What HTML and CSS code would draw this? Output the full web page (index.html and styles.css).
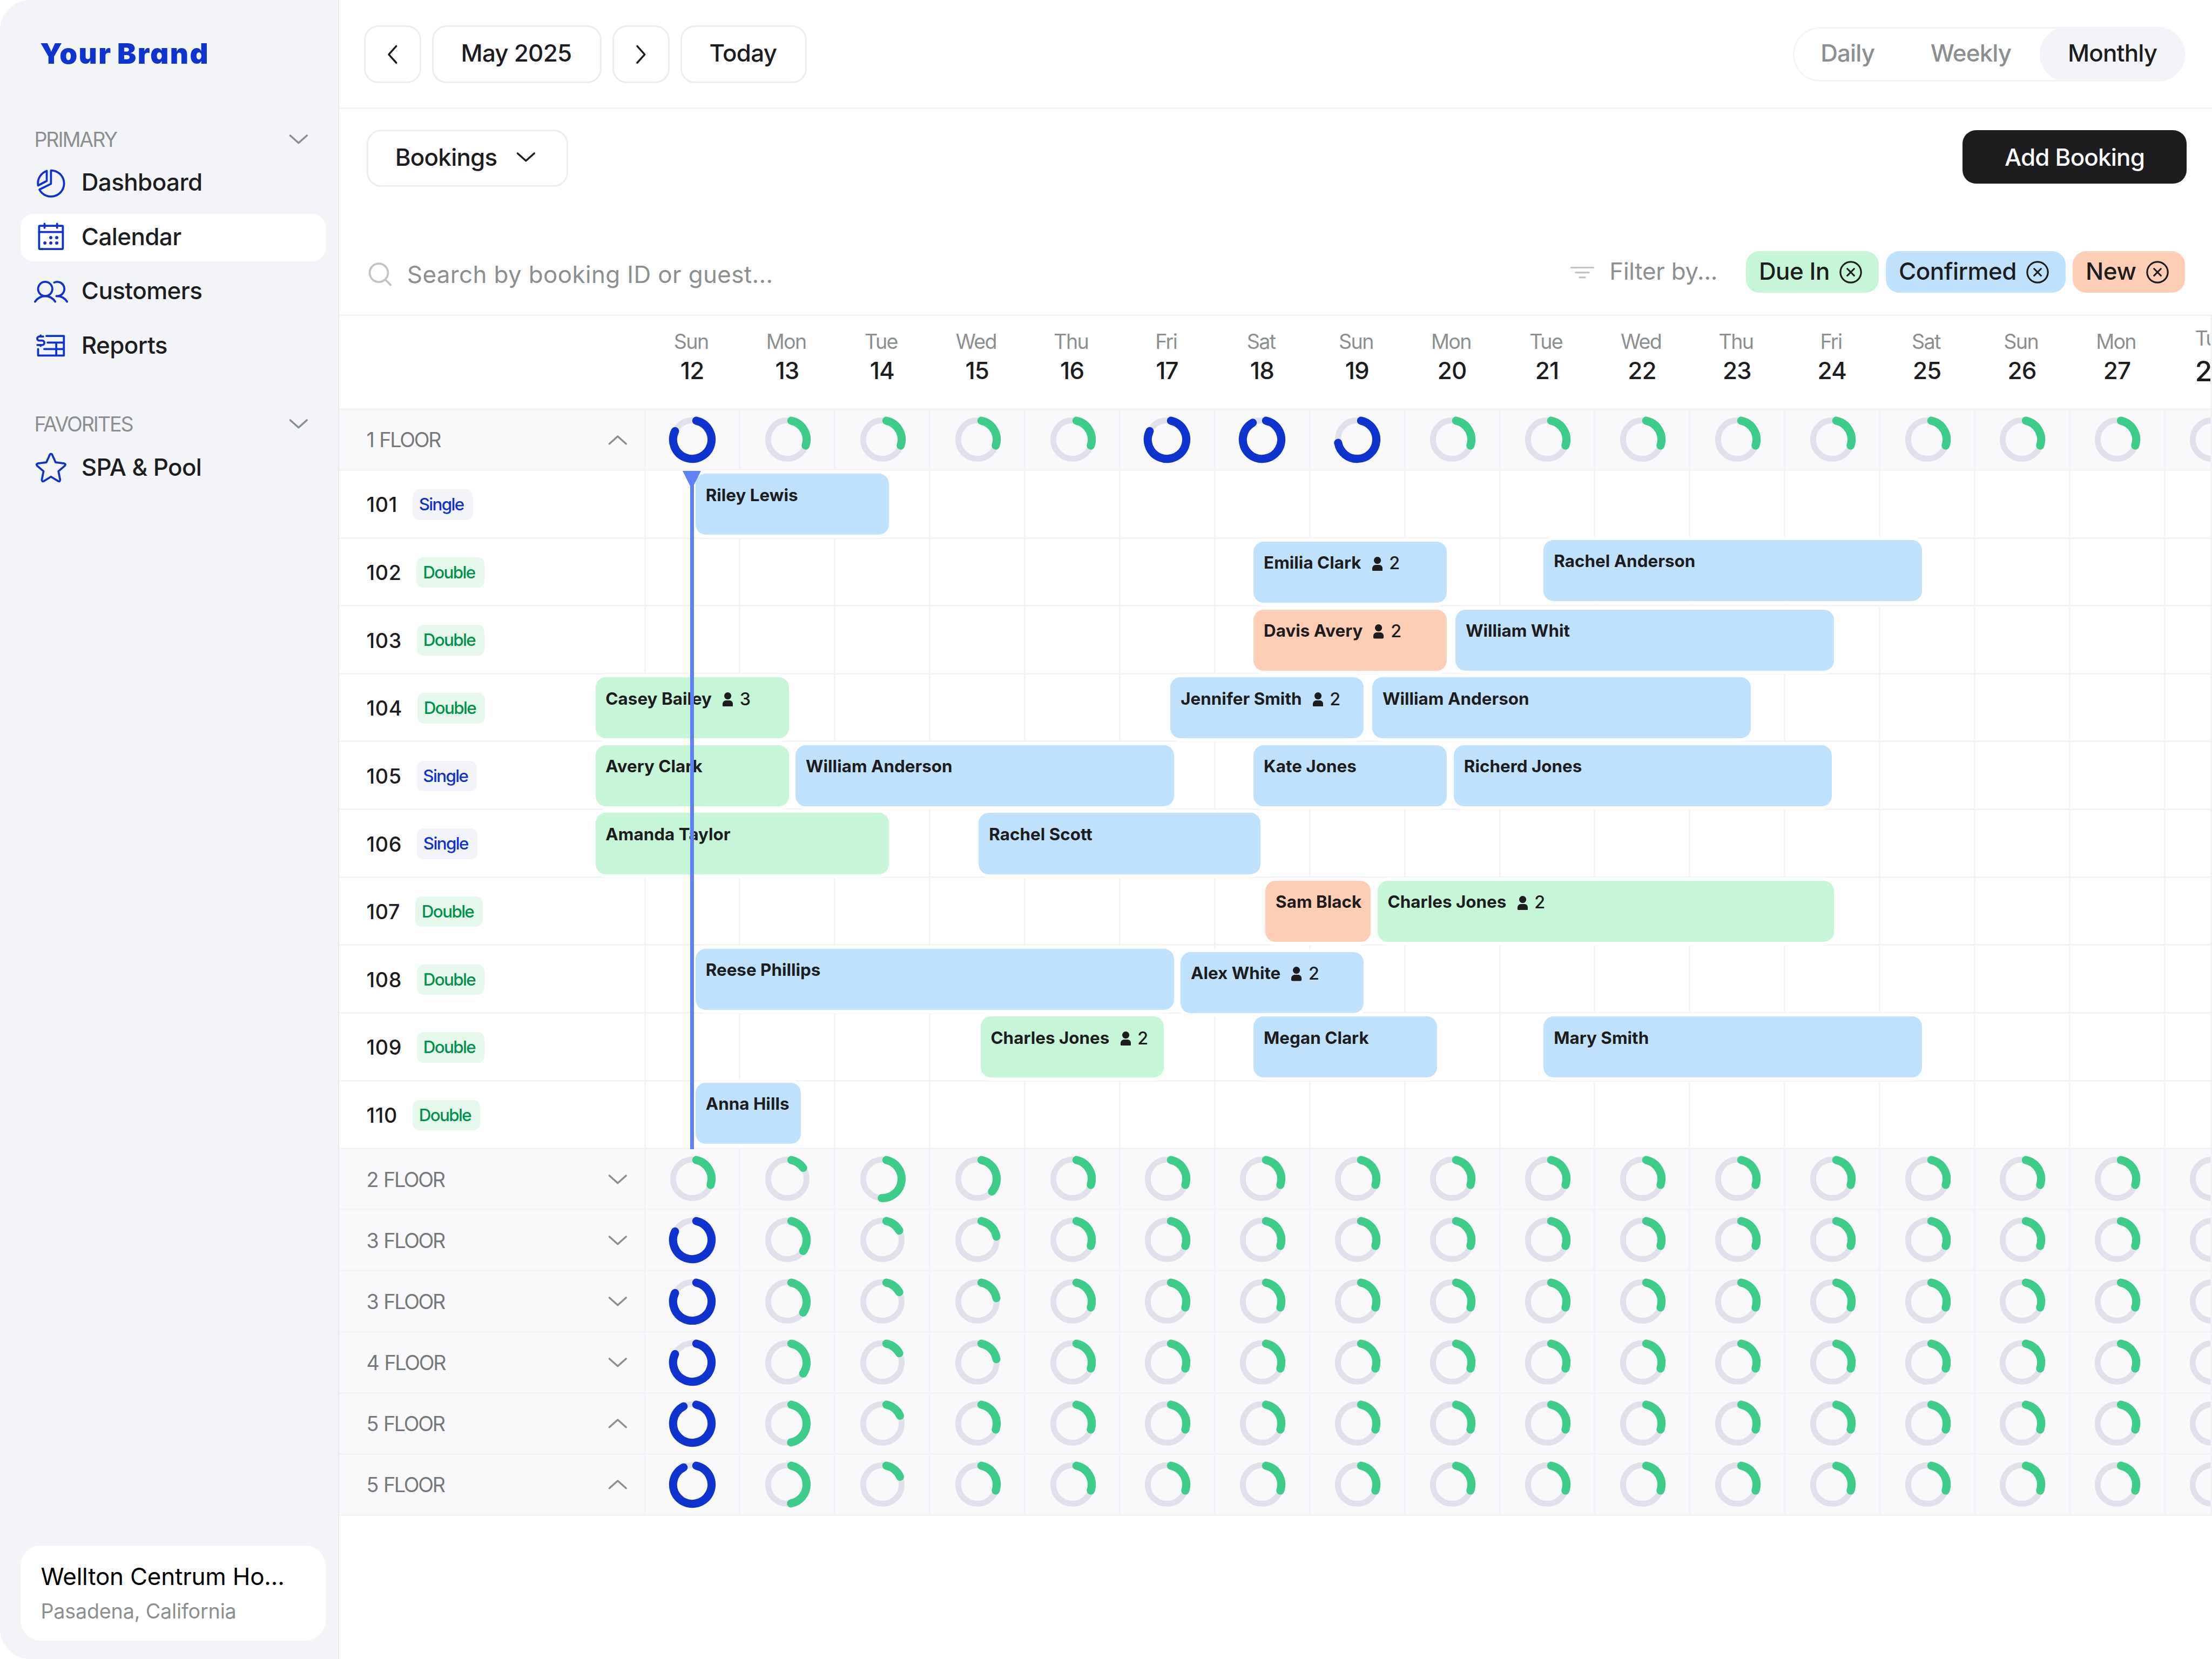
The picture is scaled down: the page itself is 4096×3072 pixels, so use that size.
FILE: index.html
```html
<!DOCTYPE html>
<html lang="en">
<head>
<meta charset="utf-8">
<title>Booking Calendar</title>
<link rel="stylesheet" href="styles.css">
</head>
<body>

<div class="app">
  <aside class="sidebar">
    <div class="brand">Your Brand</div>

    <div class="nav-heading">
      <span>PRIMARY</span>
      <svg class="chevron" viewBox="0 0 12 12"><path d="M1.1 3.8L6 8.2l4.9-4.4"/></svg>
    </div>
    <nav class="nav">
      <a class="nav-item">
        <svg class="nav-icon" viewBox="0 0 20 20"><path d="M10 2.4v7.9l-6.8 3.4A7.7 7.7 0 1 0 10 2.4z"/><path d="M7.5 2.7v5.9L2.4 11.3A7.8 7.8 0 0 1 7.5 2.7z"/></svg>
        <span>Dashboard</span>
      </a>
      <a class="nav-item active">
        <svg class="nav-icon" viewBox="0 0 20 20">
          <rect x="3" y="3.2" width="14" height="13.7" rx=".5"/><path d="M3 6.9h14M6.2 2v2.4M13.6 2v2.4"/>
          <g class="dots"><circle cx="9.9" cy="10.2" r=".95"/><circle cx="13.4" cy="10.2" r=".95"/><circle cx="6.4" cy="13.4" r=".95"/><circle cx="9.9" cy="13.4" r=".95"/><circle cx="13.4" cy="13.4" r=".95"/></g>
        </svg>
        <span>Calendar</span>
      </a>
      <a class="nav-item">
        <svg class="nav-icon" viewBox="0 0 20 20"><circle cx="6.6" cy="8.3" r="4.2"/><path d="M.6 15.8c1.5-2.1 3.5-3.3 6-3.3s4.5 1.2 5.9 3.3M11.9 4.5A4.2 4.2 0 1 1 13.6 12.5H13.2M13.6 12.5c2.5 0 4.5 1.2 5.9 3.3"/></svg>
        <span>Customers</span>
      </a>
      <a class="nav-item">
        <svg class="nav-icon" viewBox="0 0 20 20"><path d="M7.3 4.2h10.3v11.5H2.4v-3.8M8 8.1h9.6M6 11.9h11.6M13.1 8.1v7.6"/><path d="M5.4 4.5H3.1A1.2 1.2 0 0 0 3.1 6.9h1.7a1.3 1.3 0 0 1 0 2.6H2M3.9 3.9v.6M3.9 9.5v.5"/></svg>
        <span>Reports</span>
      </a>
    </nav>

    <div class="nav-heading favorites">
      <span>FAVORITES</span>
      <svg class="chevron" viewBox="0 0 12 12"><path d="M1.1 3.8L6 8.2l4.9-4.4"/></svg>
    </div>
    <nav class="nav">
      <a class="nav-item">
        <svg class="nav-icon" viewBox="0 0 20 20"><path d="M9.3 2.2Q10 1.2 10.7 2.2L12.7 6.7 17.8 7.4Q19 7.8 18.2 8.7L14.4 12l1 5Q15.3 18.3 14.2 17.8L10 15.2 5.8 17.8Q4.7 18.3 4.6 17L5.6 12 1.8 8.7Q1 7.8 2.2 7.4L7.3 6.7z"/></svg>
        <span>SPA &amp; Pool</span>
      </a>
    </nav>

    <div class="hotel">
      <div class="hotel-name">Wellton Centrum Ho...</div>
      <div class="hotel-city">Pasadena, California</div>
    </div>
  </aside>

  <main class="main">
    <header class="header">
      <button class="btn btn-arrow"><svg class="chevron dark left" viewBox="0 0 12 12"><path d="M1.1 3.8L6 8.2l4.9-4.4"/></svg></button>
      <button class="btn btn-month">May 2025</button>
      <button class="btn btn-arrow"><svg class="chevron dark right" viewBox="0 0 12 12"><path d="M1.1 3.8L6 8.2l4.9-4.4"/></svg></button>
      <button class="btn btn-today">Today</button>
      <div class="views">
        <span>Daily</span>
        <span>Weekly</span>
        <span class="selected">Monthly</span>
      </div>
    </header>

    <div class="toolbar">
      <button class="btn btn-bookings">Bookings <svg class="chevron dark" viewBox="0 0 12 12"><path d="M1.1 3.8L6 8.2l4.9-4.4"/></svg></button>
      <button class="btn-add">Add Booking</button>
    </div>

    <div class="filters">
      <div class="search">
        <svg class="search-icon" viewBox="0 0 14 14"><circle cx="6.2" cy="6.1" r="5.4"/><path d="M10.1 10.2l3 3"/></svg>
        <span>Search by booking ID or guest...</span>
      </div>
      <div class="filter-by">
        <svg class="filter-icon" viewBox="0 0 14 8"><path d="M.5 1.1h13M3.1 4h7.8M5.4 6.9h3.2"/></svg>
        <span>Filter by...</span>
      </div>
      <div class="chip green"><span>Due In</span><svg class="chip-x" viewBox="0 0 13.4 13.4"><circle cx="6.7" cy="6.7" r="6.1"/><path d="M4.7 4.7l4 4M8.7 4.7l-4 4"/></svg></div>
      <div class="chip blue"><span>Confirmed</span><svg class="chip-x" viewBox="0 0 13.4 13.4"><circle cx="6.7" cy="6.7" r="6.1"/><path d="M4.7 4.7l4 4M8.7 4.7l-4 4"/></svg></div>
      <div class="chip orange"><span>New</span><svg class="chip-x" viewBox="0 0 13.4 13.4"><circle cx="6.7" cy="6.7" r="6.1"/><path d="M4.7 4.7l4 4M8.7 4.7l-4 4"/></svg></div>
    </div>

    <section class="calendar">
      <div class="days" id="days"></div>
      <div id="firstFloor"></div>
      <div class="rooms">
        <div id="rooms"></div>
        <div class="now"></div>
      </div>
      <div id="otherFloors"></div>
    </section>
  </main>
</div>

<script src="script.js"></script>
</body>
</html>
```
FILE: script.js
```js
const dayCount = 17;
const firstDay = 12;
const weekDays = ['Sun', 'Mon', 'Tue', 'Wed', 'Thu', 'Fri', 'Sat'];

// Occupancy rings: day index -> [color, end angle], everything else uses the default
const defaultRing = ['green', 108];
const firstFloor = { name: '1 FLOOR', open: true, rings: { 0: ['blue', 296], 5: ['blue', 296], 6: ['blue', 331], 7: ['blue', 260] } };
const busy = { 0: ['blue', 296], 1: ['green', 125], 2: ['green', 61], 3: ['green', 80] };
const full = { 0: ['blue', 333], 1: ['green', 169], 2: ['green', 66] };
const otherFloors = [
  { name: '2 FLOOR', open: false, rings: { 1: ['green', 55], 2: ['green', 182], 3: ['green', 131] } },
  { name: '3 FLOOR', open: false, rings: busy },
  { name: '3 FLOOR', open: false, rings: busy },
  { name: '4 FLOOR', open: false, rings: busy },
  { name: '5 FLOOR', open: true, rings: full },
  { name: '5 FLOOR', open: true, rings: full }
];

// Bookings: [name, color, left, width, guests, top]
const rooms = [
  { number: 101, type: 'Single', bookings: [['Riley Lewis', 'blue', 210, 114]] },
  { number: 102, type: 'Double', bookings: [['Emilia Clark', 'blue', 539, 114, 2], ['Rachel Anderson', 'blue', 710, 223, 0, 0.7]] },
  { number: 103, type: 'Double', bookings: [['Davis Avery', 'orange', 539, 114, 2], ['William Whit', 'blue', 658, 223]] },
  { number: 104, type: 'Double', bookings: [['Casey Bailey', 'green', 151, 114, 3], ['Jennifer Smith', 'blue', 490, 114, 2], ['William Anderson', 'blue', 609, 223]] },
  { number: 105, type: 'Single', bookings: [['Avery Clark', 'green', 151, 114], ['William Anderson', 'blue', 269, 223], ['Kate Jones', 'blue', 539, 114], ['Richerd Jones', 'blue', 657, 223]] },
  { number: 106, type: 'Single', bookings: [['Amanda Taylor', 'green', 151, 173], ['Rachel Scott', 'blue', 377, 166]] },
  { number: 107, type: 'Double', bookings: [['Sam Black', 'orange', 546, 62], ['Charles Jones', 'green', 612, 269, 2]] },
  { number: 108, type: 'Double', bookings: [['Reese Phillips', 'blue', 210, 282], ['Alex White', 'blue', 496, 108, 2, 3.6]] },
  { number: 109, type: 'Double', bookings: [['Charles Jones', 'green', 378, 108, 2], ['Megan Clark', 'blue', 539, 108], ['Mary Smith', 'blue', 710, 223]] },
  { number: 110, type: 'Double', bookings: [['Anna Hills', 'blue', 210, 62, 0, 0.7]] }
];

const personIcon = '<svg class="person" viewBox="0 0 6.1 8.4"><circle cx="3.05" cy="2.1" r="2.1"/><path d="M0 7C0 5.6 1 4.8 2.2 4.8H3.9C5.1 4.8 6.1 5.6 6.1 7V7.7Q6.1 8.4 5.4 8.4H.7Q0 8.4 0 7.7z"/></svg>';

function point(angle) {
  const a = angle * Math.PI / 180;
  return (14 + 11.35 * Math.sin(a)).toFixed(2) + ' ' + (14 - 11.35 * Math.cos(a)).toFixed(2);
}

function ring([color, end]) {
  const large = end - 12 > 180 ? 1 : 0;
  return `<svg class="ring" viewBox="0 0 28 28"><circle cx="14" cy="14" r="11.35"/><path class="ring-${color}" d="M${point(12)}A11.35 11.35 0 ${large} 1 ${point(end)}"/></svg>`;
}

function floorRow(floor) {
  let cells = '';
  for (let i = 0; i < dayCount; i++) {
    cells += `<div class="cell">${ring(floor.rings[i] || defaultRing)}</div>`;
  }
  return `<div class="floor">
    <div class="label"><span>${floor.name}</span><svg class="chevron ${floor.open ? 'up' : ''}" viewBox="0 0 12 12"><path d="M1.1 3.8L6 8.2l4.9-4.4"/></svg></div>
    ${cells}
  </div>`;
}

function booking([name, color, left, width, guests, top = 1.7]) {
  const people = guests ? `${personIcon}<span class="guests">${guests}</span>` : '';
  return `<div class="booking ${color}" style="left:${left / 10}rem;width:${width / 10}rem;top:${top / 10}rem"><span>${name}</span>${people}</div>`;
}

function roomRow(room) {
  return `<div class="room">
    <div class="label"><span>${room.number}</span><span class="tag ${room.type.toLowerCase()}">${room.type}</span></div>
    ${'<div class="cell"></div>'.repeat(dayCount)}
    ${room.bookings.map(booking).join('')}
  </div>`;
}

function dayHeader() {
  let html = '<div class="label"></div>';
  for (let i = 0; i < dayCount; i++) {
    html += `<div class="day"><span class="day-name">${weekDays[i % 7]}</span><span class="day-number">${firstDay + i}</span></div>`;
  }
  return html;
}

document.getElementById('days').innerHTML = dayHeader();
document.getElementById('firstFloor').innerHTML = floorRow(firstFloor);
document.getElementById('rooms').innerHTML = rooms.map(roomRow).join('');
document.getElementById('otherFloors').innerHTML = otherFloors.map(floorRow).join('');
```
FILE: styles.css
```css
* {
  box-sizing: border-box;
}

/* 1rem = 10 units of the 1304 wide layout */
html {
  font-size: calc(100vw / 130.4);
}

body {
  margin: 0;
  background: #fff;
  font-family: Inter, sans-serif;
  font-size: 1.4rem;
  color: #1d1d1f;
}

svg {
  display: block;
  flex: none;
  fill: none;
  stroke-linecap: round;
  stroke-linejoin: round;
}

.app {
  display: flex;
  width: 100vw;
  height: 100vh;
  border-radius: 1.8rem;
  overflow: hidden;
}

/* Sidebar */
.sidebar {
  display: flex;
  flex-direction: column;
  flex: none;
  width: 20rem;
  padding-top: 2.17rem;
  background: #f3f4f8;
  border-right: 2px solid #e6ecee;
}

.brand {
  padding-left: 2.36rem;
  margin-bottom: 3.23rem;
  font-size: 1.68rem;
  font-weight: 900;
  font-feature-settings: "cv11";
  line-height: 2rem;
  letter-spacing: 0.045em;
  word-spacing: -0.06em;
  white-space: nowrap;
  color: #1033d0;
}

.nav-heading {
  display: flex;
  align-items: center;
  justify-content: space-between;
  height: 1.6rem;
  margin-bottom: 0.4rem;
  padding: 0 1.74rem 0 2.02rem;
  font-size: 1.2rem;
  letter-spacing: -0.057em;
  color: #8c8f90;
}

.favorites {
  margin-top: 2.4rem;
}

.chevron {
  width: 1.2rem;
  height: 1.2rem;
  stroke: #8c8f90;
  stroke-width: 1.1;
}

.chevron.dark {
  stroke: #1d1d1f;
}

.chevron.up {
  transform: rotate(180deg);
}

.chevron.left {
  transform: rotate(90deg);
}

.chevron.right {
  transform: rotate(-90deg);
}

.nav {
  display: flex;
  flex-direction: column;
  gap: 0.4rem;
  padding: 0 0.75rem 0 1.2rem;
}

.nav-item {
  display: flex;
  align-items: center;
  gap: 0.8rem;
  height: 2.8rem;
  padding-left: 0.8rem;
  border-radius: 0.8rem;
  font-weight: 500;
  letter-spacing: -0.014em;
}

.nav-item span {
  padding-bottom: 0.12rem;
}

.nav-item.active {
  background: #fff;
}

.nav-icon {
  width: 2rem;
  height: 2rem;
  stroke: #1033d0;
  stroke-width: 1.2;
}

.dots {
  fill: #1033d0;
  stroke: none;
}

.hotel {
  height: 5.63rem;
  margin: auto 0.75rem 1.07rem 1.2rem;
  padding: 0.85rem 1.2rem 0;
  border-radius: 1.2rem;
  background: #fff;
}

.hotel-name {
  line-height: 2rem;
  letter-spacing: -0.005em;
  color: #000;
  white-space: nowrap;
}

.hotel-city {
  font-size: 1.2rem;
  line-height: 2.1rem;
  letter-spacing: -0.005em;
  color: #8c8f90;
}

/* Top bars */
.main {
  display: flex;
  flex-direction: column;
  flex: 1;
  min-width: 0;
  background: #fff;
}

.header {
  display: flex;
  align-items: flex-start;
  gap: 0.65rem;
  height: 6.43rem;
  padding: 1.5rem 1.59rem 0 1.46rem;
  border-bottom: 3px solid #f2f3f7;
}

.btn {
  display: flex;
  align-items: center;
  justify-content: center;
  height: 3.39rem;
  padding: 0 0.06rem 0.12rem 0;
  border: 3px solid #e8eef1;
  border-radius: 0.85rem;
  background: #fff;
  color: #1d1d1f;
  font: 500 1.4rem Inter, sans-serif;
  letter-spacing: -0.018em;
}

.btn-arrow {
  width: 3.36rem;
  padding: 0;
}

.btn-month {
  width: 9.99rem;
}

.btn-today {
  width: 7.43rem;
}

.views {
  display: grid;
  grid-template-columns: 6.41rem 8.13rem 8.56rem;
  height: 3.2rem;
  margin: 0.1rem 0 0 auto;
  border-radius: 1.6rem;
  box-shadow: inset 0 0 0 3px #f3f4f8;
  font-weight: 500;
  line-height: 3.08rem;
  letter-spacing: -0.02em;
  text-align: center;
  color: #8c8f90;
}

.views .selected {
  height: 3.2rem;
  border-radius: 1.6rem;
  background: #f3f4f8;
  color: #1d1d1f;
}

.toolbar {
  display: flex;
  align-items: flex-start;
  justify-content: space-between;
  padding: 1.2rem 1.5rem 0 1.62rem;
}

.btn-bookings {
  gap: 1.1rem;
  width: 11.88rem;
  height: 3.37rem;
  padding-right: 0.22rem;
}

.btn-add {
  width: 13.2rem;
  height: 3.17rem;
  margin-top: 0.04rem;
  padding: 0;
  border: 0;
  border-radius: 0.8rem;
  background: #1d1d1f;
  color: #fff;
  font: 500 1.4rem Inter, sans-serif;
  letter-spacing: -0.019em;
}

.filters {
  display: flex;
  align-items: flex-start;
  height: 7.63rem;
  padding: 3.82rem 1.59rem 0 1.7rem;
  border-bottom: 3px solid #f2f3f7;
  line-height: 2.36rem;
}

.search {
  display: flex;
  align-items: center;
  gap: 0.9rem;
  margin: 0.18rem auto 0 0;
  letter-spacing: 0.008em;
  color: #8c8f90;
}

.search-icon {
  width: 1.4rem;
  height: 1.4rem;
  stroke: #c2c3c6;
  stroke-width: 1.2;
}

.filter-by {
  display: flex;
  align-items: center;
  gap: 0.9rem;
  margin-right: 1.25rem;
  letter-spacing: -0.006em;
  color: #8c8f90;
}

.filter-icon {
  width: 1.4rem;
  height: 0.8rem;
  margin-top: 0.12rem;
  stroke: #c2c3c6;
  stroke-width: 1;
}

.chip {
  display: flex;
  align-items: center;
  gap: 0.58rem;
  height: 2.44rem;
  margin-left: 0.42rem;
  padding: 0 0.97rem 0 0.77rem;
  border-radius: 0.8rem;
  font-weight: 500;
  letter-spacing: -0.012em;
}

.chip span {
  padding-bottom: 0.08rem;
}

.chip-x {
  width: 1.34rem;
  height: 1.34rem;
  stroke: #1d1d1f;
  stroke-width: 1;
}

.green {
  background: #c6f5d7;
}

.blue {
  background: #bfe1fc;
}

.orange {
  background: #fecdb5;
}

/* Calendar */
.calendar {
  overflow: hidden;
  border-right: 3px solid #f2f3f7;
}

.days,
.floor,
.room {
  display: flex;
  width: 115rem;
}

.label {
  display: flex;
  align-items: center;
  flex: none;
  width: 18.06rem;
  padding: 0 0.94rem 0 1.6rem;
}

.cell {
  display: flex;
  align-items: center;
  justify-content: center;
  flex: none;
  width: 5.6rem;
  border-right: 3px solid #f2f3f7;
}

.days {
  height: 5.53rem;
  border-bottom: 3px solid #f2f3f7;
}

.day {
  display: flex;
  flex-direction: column;
  align-items: center;
  flex: none;
  width: 5.6rem;
  padding: 0.71rem 0.12rem 0 0;
}

.day-name {
  margin-left: -0.12rem;
  font-size: 1.2rem;
  line-height: 1.6rem;
  letter-spacing: -0.045em;
  color: #8c8f90;
}

.day-number {
  font-weight: 500;
  line-height: 1.82rem;
  letter-spacing: -0.02em;
}

/* Last day is cut off by the edge of the screen */
.day:last-child {
  align-items: flex-start;
  padding: 0.51rem 0 0 1.74rem;
}

.day:last-child .day-name {
  margin: 0;
}

.day:last-child .day-number {
  font-size: 1.65rem;
  line-height: 2.35rem;
}

.floor {
  height: 3.6rem;
  background: #f9f9fc;
  border-bottom: 3px solid #f2f3f7;
}

.floor .label {
  justify-content: space-between;
  padding-top: 0.03rem;
  border-right: 3px solid #f2f3f7;
  font-size: 1.2rem;
  letter-spacing: -0.062em;
  word-spacing: 0.07em;
  color: #75797a;
}

.ring {
  width: 2.8rem;
  height: 2.8rem;
  stroke: #e1e1eb;
  stroke-width: 3.5;
}

.ring path {
  stroke-width: 4.8;
}

.ring-blue {
  stroke: #1033d0;
}

.ring-green {
  stroke: #3fcb8a;
}

.rooms {
  position: relative;
}

.room {
  position: relative;
  height: 4rem;
  border-bottom: 3px solid #f2f3f7;
}

.room .label {
  gap: 0.88rem;
  padding-top: 0.07rem;
  border-right: 3px solid #f2f3f7;
  font-size: 1.2rem;
  font-weight: 500;
  letter-spacing: 0.018em;
}

.tag {
  height: 1.8rem;
  padding: 0 0.54rem 0 0.38rem;
  border-radius: 0.4rem;
  font-size: 1rem;
  line-height: 1.84rem;
  letter-spacing: -0.053em;
}

.single {
  background: #f3f4fa;
  color: #1033d0;
}

.double {
  background: #e6f7ec;
  color: #00914d;
}

.booking {
  position: absolute;
  z-index: 1;
  display: flex;
  height: 3.6rem;
  padding: 0.68rem 0 0 0.6rem;
  border-radius: 0.6rem;
  box-shadow: 0 0 0 0.2rem #fff;
  font-size: 1rem;
  font-weight: 700;
  line-height: 1.2rem;
  white-space: nowrap;
}

.person {
  width: 0.61rem;
  height: 0.84rem;
  margin: 0.2rem 0.4rem 0 0.64rem;
  fill: #1d1d1f;
}

.guests {
  font-size: 1.03rem;
  font-weight: 500;
}

/* Current time marker */
.now {
  position: absolute;
  z-index: 2;
  top: 0;
  bottom: 0;
  left: 20.7rem;
  width: 0.2rem;
  background: #6080f5;
}

.now::before {
  content: "";
  position: absolute;
  top: 0;
  left: -0.47rem;
  border: 0.57rem solid transparent;
  border-top: 1.1rem solid #6080f5;
  border-bottom: 0;
}
```
